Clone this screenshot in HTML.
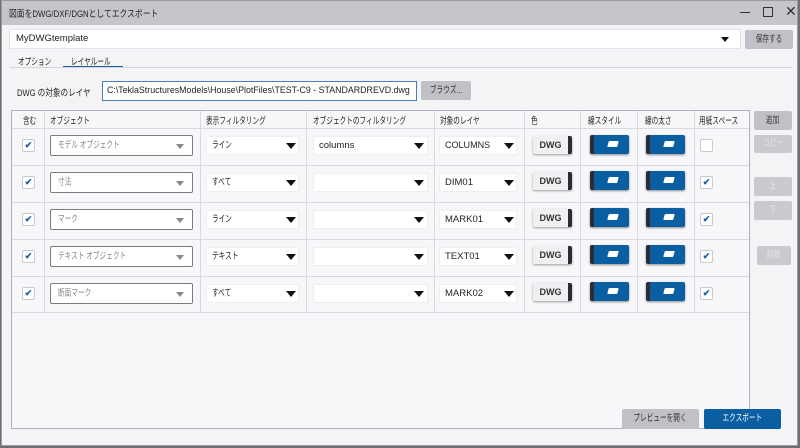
<!DOCTYPE html>
<html><head><meta charset="utf-8"><style>
*{box-sizing:border-box;margin:0;padding:0}
body{width:800px;height:448px;overflow:hidden;background:#6d6f75;font-family:"Liberation Sans","Noto Sans CJK JP",sans-serif;font-size:9.5px;color:#222;position:relative;white-space:nowrap}
.win{position:absolute;left:1px;top:0;width:797px;height:446px;background:#f4f4f6;border:1px solid #9a9ca2}
.a{position:absolute}
.j{display:inline-block;transform:scaleX(.7);transform-origin:left center}
.jc{display:inline-block;transform:scaleX(.7);transform-origin:center center}
.title{left:0;top:0;width:795px;height:24px;background:#c4c6cc}
.btn{position:absolute;background:#bfc1c7;border-radius:2px;text-align:center;color:#333;overflow:hidden}
.dis{background:#c9cacd;color:#e4e4e6}
.inp{position:absolute;background:#fff;border:1px solid #e2e3e6;overflow:hidden}
.tri{position:absolute;width:0;height:0;border-left:5px solid transparent;border-right:5px solid transparent;border-top:6px solid #111}
.cb{position:absolute;width:13px;height:13px;background:#fff;border:1px solid #c8cad0;border-radius:2px;color:#1b5da8;font-size:9px;line-height:11px;text-align:center;font-weight:bold}
.vl{position:absolute;width:1px;background:#d7d9de}
.hl{position:absolute;height:1px;background:#d7d9de}
.combo{position:absolute;background:#fff;border:1px solid #7a7c80;border-radius:2px;height:21px;color:#888;padding-left:7px;line-height:19px}
.combo .t2{position:absolute;right:8px;top:8px;border-left:4px solid transparent;border-right:4px solid transparent;border-top:5px solid #888;width:0;height:0}
.dd{position:absolute;background:#fff;height:19px;border:1px solid #eceef0;padding-left:5px;line-height:17px;color:#222}
.dwg{position:absolute;width:39px;height:18px;background:#f0f0f2;border-radius:2px;box-shadow:0 1px 2px #999;font-size:9px;font-weight:bold;text-align:center;line-height:18px;color:#333;border-right:4px solid #2a2d33}
.bl{position:absolute;width:39px;height:19px;background:#0a5fa3;border-left:4px solid #2a2d33;border-radius:2px;box-shadow:0 1px 2px #888}
.bl:after{content:"";position:absolute;left:14px;top:6px;width:10px;height:6px;background:#fff;border-radius:1px;transform:skewX(-15deg)}
.h{position:absolute;top:112px;color:#222}
</style></head><body>
<div class="win">
<div class="a title"></div>
<div class="a" style="left:7px;top:5px"><span class="j" style="transform:scaleX(.82)">図面をDWG/DXF/DGNとしてエクスポート</span></div>
<div class="a" style="left:738px;top:11px;width:10px;height:1px;background:#333"></div>
<div class="a" style="left:761px;top:6px;width:10px;height:10px;border:1px solid #333"></div>
<div class="a" style="left:783px;top:2px;font-size:14px;color:#333">✕</div>

<div class="inp" style="left:7px;top:28px;width:732px;height:20px;padding-left:6px;line-height:18px">MyDWGtemplate</div>
<div class="tri" style="left:719px;top:36px;border-width:5px 4px 0 4px"></div>
<div class="btn" style="left:743px;top:29px;width:48px;height:19px;line-height:19px"><span class="jc">保存する</span></div>

<div class="a" style="left:16px;top:53px"><span class="j">オプション</span></div>
<div class="a" style="left:69px;top:53px"><span class="j">レイヤルール</span></div>
<div class="a" style="left:61px;top:65px;width:60px;height:2px;background:#1b5da8"></div>
<div class="a" style="left:8px;top:66px;width:783px;height:1px;background:#d4d6da"></div>

<div class="a" style="left:15px;top:84px"><span class="j" style="transform:scaleX(.8)">DWG の対象のレイヤ</span></div>
<div class="inp" style="left:100px;top:80px;width:315px;height:20px;border:1px solid #4a7dc0;padding-left:4px;line-height:18px"><span class="j" style="transform:scaleX(.93)">C:\TeklaStructuresModels\House\PlotFiles\TEST-C9 - STANDARDREVD.dwg</span></div>
<div class="btn" style="left:419px;top:80px;width:50px;height:19px;line-height:19px"><span class="jc">ブラウズ...</span></div>

<div class="a" style="left:9px;top:109px;width:739px;height:319px;background:#f7f7fa;border:1px solid #a9b3c4"></div>
<div class="hl" style="left:10px;top:127px;width:737px"></div>
<div class="hl" style="left:10px;top:164px;width:737px"></div>
<div class="hl" style="left:10px;top:201px;width:737px"></div>
<div class="hl" style="left:10px;top:238px;width:737px"></div>
<div class="hl" style="left:10px;top:275px;width:737px"></div>
<div class="hl" style="left:10px;top:311px;width:737px"></div>
<div class="vl" style="left:42px;top:110px;height:202px"></div>
<div class="vl" style="left:198px;top:110px;height:202px"></div>
<div class="vl" style="left:304px;top:110px;height:202px"></div>
<div class="vl" style="left:432px;top:110px;height:202px"></div>
<div class="vl" style="left:522px;top:110px;height:202px"></div>
<div class="vl" style="left:578px;top:110px;height:202px"></div>
<div class="vl" style="left:635px;top:110px;height:202px"></div>
<div class="vl" style="left:692px;top:110px;height:202px"></div>

<div class="h" style="left:21px"><span class="j">含む</span></div>
<div class="h" style="left:48px"><span class="j">オブジェクト</span></div>
<div class="h" style="left:204px"><span class="j">表示フィルタリング</span></div>
<div class="h" style="left:311px"><span class="j">オブジェクトのフィルタリング</span></div>
<div class="h" style="left:438px"><span class="j">対象のレイヤ</span></div>
<div class="h" style="left:529px"><span class="j">色</span></div>
<div class="h" style="left:586px"><span class="j">線スタイル</span></div>
<div class="h" style="left:643px"><span class="j">線の太さ</span></div>
<div class="h" style="left:697px"><span class="j">用紙スペース</span></div>

<div class="cb" style="left:20px;top:138px">✔</div>
<div class="combo" style="left:48px;top:134px;width:143px"><span class="j">モデル オブジェクト</span><span class="t2"></span></div>
<div class="dd" style="left:204px;top:135px;width:93px"><span class="j">ライン</span></div><div class="tri" style="left:284px;top:142px"></div>
<div class="dd" style="left:311px;top:135px;width:115px">columns</div><div class="tri" style="left:412px;top:142px"></div>
<div class="dd" style="left:437px;top:135px;width:78px"><span class="j" style="transform:scaleX(.95)">COLUMNS</span></div><div class="tri" style="left:502px;top:142px"></div>
<div class="dwg" style="left:531px;top:135px">DWG</div>
<div class="bl" style="left:588px;top:134px"></div>
<div class="bl" style="left:644px;top:134px"></div>
<div class="cb" style="left:698px;top:138px"></div>

<div class="cb" style="left:20px;top:175px">✔</div>
<div class="combo" style="left:48px;top:171px;width:143px"><span class="j">寸法</span><span class="t2"></span></div>
<div class="dd" style="left:204px;top:172px;width:93px"><span class="j">すべて</span></div><div class="tri" style="left:284px;top:179px"></div>
<div class="dd" style="left:311px;top:172px;width:115px"></div><div class="tri" style="left:412px;top:179px"></div>
<div class="dd" style="left:437px;top:172px;width:78px">DIM01</div><div class="tri" style="left:502px;top:179px"></div>
<div class="dwg" style="left:531px;top:171px">DWG</div>
<div class="bl" style="left:588px;top:170px"></div>
<div class="bl" style="left:644px;top:170px"></div>
<div class="cb" style="left:698px;top:175px">✔</div>

<div class="cb" style="left:20px;top:212px">✔</div>
<div class="combo" style="left:48px;top:208px;width:143px"><span class="j">マーク</span><span class="t2"></span></div>
<div class="dd" style="left:204px;top:209px;width:93px"><span class="j">ライン</span></div><div class="tri" style="left:284px;top:216px"></div>
<div class="dd" style="left:311px;top:209px;width:115px"></div><div class="tri" style="left:412px;top:216px"></div>
<div class="dd" style="left:437px;top:209px;width:78px">MARK01</div><div class="tri" style="left:502px;top:216px"></div>
<div class="dwg" style="left:531px;top:208px">DWG</div>
<div class="bl" style="left:588px;top:207px"></div>
<div class="bl" style="left:644px;top:207px"></div>
<div class="cb" style="left:698px;top:212px">✔</div>

<div class="cb" style="left:20px;top:249px">✔</div>
<div class="combo" style="left:48px;top:245px;width:143px"><span class="j">テキスト オブジェクト</span><span class="t2"></span></div>
<div class="dd" style="left:204px;top:246px;width:93px"><span class="j">テキスト</span></div><div class="tri" style="left:284px;top:253px"></div>
<div class="dd" style="left:311px;top:246px;width:115px"></div><div class="tri" style="left:412px;top:253px"></div>
<div class="dd" style="left:437px;top:246px;width:78px">TEXT01</div><div class="tri" style="left:502px;top:253px"></div>
<div class="dwg" style="left:531px;top:245px">DWG</div>
<div class="bl" style="left:588px;top:244px"></div>
<div class="bl" style="left:644px;top:244px"></div>
<div class="cb" style="left:698px;top:249px">✔</div>

<div class="cb" style="left:20px;top:286px">✔</div>
<div class="combo" style="left:48px;top:282px;width:143px"><span class="j">断面マーク</span><span class="t2"></span></div>
<div class="dd" style="left:204px;top:283px;width:93px"><span class="j">すべて</span></div><div class="tri" style="left:284px;top:290px"></div>
<div class="dd" style="left:311px;top:283px;width:115px"></div><div class="tri" style="left:412px;top:290px"></div>
<div class="dd" style="left:437px;top:283px;width:78px">MARK02</div><div class="tri" style="left:502px;top:290px"></div>
<div class="dwg" style="left:531px;top:282px">DWG</div>
<div class="bl" style="left:588px;top:281px"></div>
<div class="bl" style="left:644px;top:281px"></div>
<div class="cb" style="left:698px;top:286px">✔</div>

<div class="btn" style="left:752px;top:110px;width:38px;height:19px;line-height:19px"><span class="jc">追加</span></div>
<div class="btn dis" style="left:752px;top:134px;width:38px;height:18px;line-height:18px"><span class="jc">コピー</span></div>
<div class="btn dis" style="left:752px;top:176px;width:38px;height:19px;line-height:19px"><span class="jc">上</span></div>
<div class="btn dis" style="left:752px;top:200px;width:38px;height:19px;line-height:19px"><span class="jc">下</span></div>
<div class="btn dis" style="left:755px;top:245px;width:34px;height:19px;line-height:19px"><span class="jc">削除</span></div>

<div class="btn" style="left:620px;top:408px;width:77px;height:20px;line-height:20px"><span class="jc">プレビューを開く</span></div>
<div class="btn" style="left:702px;top:408px;width:77px;height:20px;line-height:20px;background:#0a5fa3;color:#fff"><span class="jc">エクスポート</span></div>
</div>
</body></html>
